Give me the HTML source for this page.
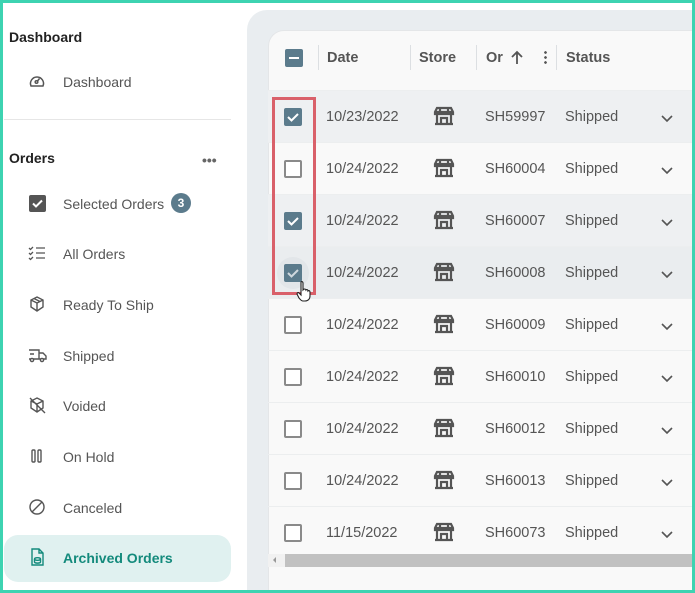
<!DOCTYPE html>
<html><head><style>
*{box-sizing:border-box;margin:0;padding:0}
body{width:695px;height:593px;overflow:hidden;font-family:"Liberation Sans",sans-serif;background:#fff;position:relative}
.frame{position:absolute;inset:0;border:3px solid #3dd3b1;z-index:50;pointer-events:none}
.side{position:absolute;left:0;top:0;width:247px;height:593px;background:#fff}
.h{position:absolute;left:9px;font-size:14px;color:#222;font-weight:bold}
.it{position:absolute;left:0;width:247px;height:40px;font-size:14px;color:#555}
.it span{position:absolute;left:63px;top:13px}
.it svg{position:absolute;left:28px;top:11px}
.main{position:absolute;left:247px;top:10px;width:448px;height:583px;background:#e9edf0;border-top-left-radius:20px}
.card{position:absolute;left:268px;top:30px;width:427px;height:563px;background:#f9f9f9;border-top-left-radius:16px;border:1px solid #e4e6e8;border-right:none;border-bottom:none;overflow:hidden}
.th{position:absolute;top:50px;font-size:14.5px;color:#555;font-weight:bold}
.sep{position:absolute;top:45px;width:1px;height:25px;background:#dcdfe2}
.row{position:absolute;left:268px;width:427px;height:52px;font-size:14.5px;color:#555;border-top:1px solid #eceeef}
.row.sel{background:#eef0f2}
.row .d{position:absolute;left:58px;top:18px}
.row .o{position:absolute;left:217px;top:18px}
.row .s{position:absolute;left:297px;top:18px}
.cb{position:absolute;left:16px;top:17px;width:18px;height:18px;border:2px solid #8a8a8a;border-radius:2px;background:#fff}
.cb.on{background:#5b7b8c;border-color:#5b7b8c}
.st{position:absolute;left:165px;top:14px}
.ch{position:absolute;left:392px;top:23px}
</style></head><body>
<div class="side">
<div class="h" style="top:29px">Dashboard</div>
<div class="it" style="top:61px"><svg width="18" height="18" viewBox="0 0 18 18" fill="none" stroke="#555" stroke-width="1.5"><path d="M3 14a6.5 6.5 0 1 1 12 0z"/><circle cx="8.5" cy="10" r="1.3"/><path d="M9.5 9l2-2.5"/></svg><span>Dashboard</span></div>
<div style="position:absolute;left:4px;top:119px;width:227px;height:1px;background:#e6e6e6"></div>
<div class="h" style="top:150px">Orders</div>
<div style="position:absolute;left:202px;top:152px;font-size:14px;color:#666;letter-spacing:0;font-weight:bold">•••</div>
<div class="it" style="top:183px"><svg width="18" height="18" viewBox="0 0 18 18"><rect x="1" y="1" width="17" height="17" rx="2" fill="#555"/><path d="M5 9.5l3 3 6-6" stroke="#fff" stroke-width="2" fill="none"/></svg><span>Selected Orders</span><div style="position:absolute;left:171px;top:10px;width:20px;height:20px;border-radius:50%;background:#5b7b8c;color:#fff;font-size:12px;font-weight:bold;text-align:center;line-height:20px">3</div></div>
<div class="it" style="top:233px"><svg width="18" height="18" viewBox="0 0 18 18" fill="none" stroke="#555" stroke-width="1.3"><path d="M1 4l1.5 1.5L5 3M1 9l1.5 1.5L5 8M1 14l1.5 1.5L5 13M8 4h9M8 9h9M8 14h9"/></svg><span>All Orders</span></div>
<div class="it" style="top:284px"><svg width="18" height="18" viewBox="0 0 18 18" fill="none" stroke="#555" stroke-width="1.4"><path d="M9 2l6 3v7l-6 4-6-4V5zM3 5l6 3 6-3M9 8v8M6 3.5l6 3"/></svg><span>Ready To Ship</span></div>
<div class="it" style="top:335px"><svg width="19" height="18" viewBox="0 0 19 18" fill="none" stroke="#555" stroke-width="1.4"><path d="M1 4h10v9H1M11 7h4l3 3v3h-7M2 8h4"/><circle cx="4" cy="14" r="1.6" fill="#fff"/><circle cx="14" cy="14" r="1.6" fill="#fff"/></svg><span>Shipped</span></div>
<div class="it" style="top:385px"><svg width="18" height="18" viewBox="0 0 18 18" fill="none" stroke="#555" stroke-width="1.4"><path d="M9 2l6 3v7l-6 4-6-4V5zM3 5l6 3 6-3M9 8v8M2 2l15 15"/></svg><span>Voided</span></div>
<div class="it" style="top:436px"><svg width="18" height="18" viewBox="0 0 18 18" fill="none" stroke="#555" stroke-width="1.4"><rect x="4" y="3" width="3" height="12" rx="1"/><rect x="10" y="3" width="3" height="12" rx="1"/></svg><span>On Hold</span></div>
<div class="it" style="top:487px"><svg width="18" height="18" viewBox="0 0 18 18" fill="none" stroke="#555" stroke-width="1.4"><circle cx="9" cy="9" r="7"/><path d="M4 14L14 4"/></svg><span>Canceled</span></div>
<div style="position:absolute;left:4px;top:535px;width:227px;height:47px;background:#e0f1f0;border-radius:14px"></div>
<div class="it" style="top:537px;color:#138a7c;font-weight:bold"><svg width="18" height="18" viewBox="0 0 18 18" fill="none" stroke="#138a7c" stroke-width="1.4"><path d="M4 1h7l4 4v12H4zM11 1v4h4"/><ellipse cx="9.5" cy="11" rx="3" ry="1.3"/><path d="M6.5 11v3c0 1.5 6 1.5 6 0v-3"/></svg><span>Archived Orders</span></div>
</div>
<div class="main"></div>
<div class="card"></div>
<div style="position:absolute;left:285px;top:49px;width:18px;height:18px;border-radius:2px;background:#5b7b8c"><div style="position:absolute;left:4px;top:8px;width:10px;height:2px;background:#fff"></div></div>
<div class="sep" style="left:318px"></div><div class="th" style="left:327px">Date</div>
<div class="sep" style="left:410px"></div><div class="th" style="left:419px">Store</div>
<div class="sep" style="left:476px"></div><div class="th" style="left:486px">Or</div>
<svg style="position:absolute;left:510px;top:50px" width="14" height="15" viewBox="0 0 14 15"><path d="M7 14V2M2 7l5-5 5 5" stroke="#555" stroke-width="1.8" fill="none"/></svg>
<div style="position:absolute;left:544px;top:50px;width:3px;height:14px;background:radial-gradient(circle,#555 1.2px,transparent 1.5px) 0 0/3px 5px"></div>
<div class="sep" style="left:556px"></div><div class="th" style="left:566px">Status</div>
<div class="row sel" style="top:90px"><div class="cb on"><svg width="14" height="14" viewBox="0 0 14 14" style="position:absolute;left:0;top:0"><path d="M2 7l3.5 3.5L12 4" stroke="#fff" stroke-width="2" fill="none"/></svg></div><span class="d">10/23/2022</span><svg class="st" width="22" height="22" viewBox="0 0 22 22" fill="none" stroke="#555" stroke-width="2.2"><path d="M4 3h14l2 4v2H2V7zM2 7h18M4 9v10h14V9M2 19h18M8 19v-6h6v6M7 3v4M15 3v4"/></svg><span class="o">SH59997</span><span class="s">Shipped</span><svg class="ch" width="14" height="10" viewBox="0 0 14 10"><path d="M2 2l5 5 5-5" stroke="#555" stroke-width="1.6" fill="none"/></svg></div>
<div class="row" style="top:142px"><div class="cb"></div><span class="d">10/24/2022</span><svg class="st" width="22" height="22" viewBox="0 0 22 22" fill="none" stroke="#555" stroke-width="2.2"><path d="M4 3h14l2 4v2H2V7zM2 7h18M4 9v10h14V9M2 19h18M8 19v-6h6v6M7 3v4M15 3v4"/></svg><span class="o">SH60004</span><span class="s">Shipped</span><svg class="ch" width="14" height="10" viewBox="0 0 14 10"><path d="M2 2l5 5 5-5" stroke="#555" stroke-width="1.6" fill="none"/></svg></div>
<div class="row sel" style="top:194px"><div class="cb on"><svg width="14" height="14" viewBox="0 0 14 14" style="position:absolute;left:0;top:0"><path d="M2 7l3.5 3.5L12 4" stroke="#fff" stroke-width="2" fill="none"/></svg></div><span class="d">10/24/2022</span><svg class="st" width="22" height="22" viewBox="0 0 22 22" fill="none" stroke="#555" stroke-width="2.2"><path d="M4 3h14l2 4v2H2V7zM2 7h18M4 9v10h14V9M2 19h18M8 19v-6h6v6M7 3v4M15 3v4"/></svg><span class="o">SH60007</span><span class="s">Shipped</span><svg class="ch" width="14" height="10" viewBox="0 0 14 10"><path d="M2 2l5 5 5-5" stroke="#555" stroke-width="1.6" fill="none"/></svg></div>
<div class="row sel" style="top:246px;background:#eaedef"><div style="position:absolute;left:9px;top:10px;width:32px;height:32px;border-radius:50%;background:#e2e6e9"></div><div class="cb on"><svg width="14" height="14" viewBox="0 0 14 14" style="position:absolute;left:0;top:0"><path d="M2 7l3.5 3.5L12 4" stroke="#cfd8de" stroke-width="2" fill="none"/></svg></div><span class="d">10/24/2022</span><svg class="st" width="22" height="22" viewBox="0 0 22 22" fill="none" stroke="#555" stroke-width="2.2"><path d="M4 3h14l2 4v2H2V7zM2 7h18M4 9v10h14V9M2 19h18M8 19v-6h6v6M7 3v4M15 3v4"/></svg><span class="o">SH60008</span><span class="s">Shipped</span><svg class="ch" width="14" height="10" viewBox="0 0 14 10"><path d="M2 2l5 5 5-5" stroke="#555" stroke-width="1.6" fill="none"/></svg></div>
<div class="row" style="top:298px"><div class="cb"></div><span class="d">10/24/2022</span><svg class="st" width="22" height="22" viewBox="0 0 22 22" fill="none" stroke="#555" stroke-width="2.2"><path d="M4 3h14l2 4v2H2V7zM2 7h18M4 9v10h14V9M2 19h18M8 19v-6h6v6M7 3v4M15 3v4"/></svg><span class="o">SH60009</span><span class="s">Shipped</span><svg class="ch" width="14" height="10" viewBox="0 0 14 10"><path d="M2 2l5 5 5-5" stroke="#555" stroke-width="1.6" fill="none"/></svg></div>
<div class="row" style="top:350px"><div class="cb"></div><span class="d">10/24/2022</span><svg class="st" width="22" height="22" viewBox="0 0 22 22" fill="none" stroke="#555" stroke-width="2.2"><path d="M4 3h14l2 4v2H2V7zM2 7h18M4 9v10h14V9M2 19h18M8 19v-6h6v6M7 3v4M15 3v4"/></svg><span class="o">SH60010</span><span class="s">Shipped</span><svg class="ch" width="14" height="10" viewBox="0 0 14 10"><path d="M2 2l5 5 5-5" stroke="#555" stroke-width="1.6" fill="none"/></svg></div>
<div class="row" style="top:402px"><div class="cb"></div><span class="d">10/24/2022</span><svg class="st" width="22" height="22" viewBox="0 0 22 22" fill="none" stroke="#555" stroke-width="2.2"><path d="M4 3h14l2 4v2H2V7zM2 7h18M4 9v10h14V9M2 19h18M8 19v-6h6v6M7 3v4M15 3v4"/></svg><span class="o">SH60012</span><span class="s">Shipped</span><svg class="ch" width="14" height="10" viewBox="0 0 14 10"><path d="M2 2l5 5 5-5" stroke="#555" stroke-width="1.6" fill="none"/></svg></div>
<div class="row" style="top:454px"><div class="cb"></div><span class="d">10/24/2022</span><svg class="st" width="22" height="22" viewBox="0 0 22 22" fill="none" stroke="#555" stroke-width="2.2"><path d="M4 3h14l2 4v2H2V7zM2 7h18M4 9v10h14V9M2 19h18M8 19v-6h6v6M7 3v4M15 3v4"/></svg><span class="o">SH60013</span><span class="s">Shipped</span><svg class="ch" width="14" height="10" viewBox="0 0 14 10"><path d="M2 2l5 5 5-5" stroke="#555" stroke-width="1.6" fill="none"/></svg></div>
<div class="row" style="top:506px"><div class="cb"></div><span class="d">11/15/2022</span><svg class="st" width="22" height="22" viewBox="0 0 22 22" fill="none" stroke="#555" stroke-width="2.2"><path d="M4 3h14l2 4v2H2V7zM2 7h18M4 9v10h14V9M2 19h18M8 19v-6h6v6M7 3v4M15 3v4"/></svg><span class="o">SH60073</span><span class="s">Shipped</span><svg class="ch" width="14" height="10" viewBox="0 0 14 10"><path d="M2 2l5 5 5-5" stroke="#555" stroke-width="1.6" fill="none"/></svg></div>
<div style="position:absolute;left:268px;top:554px;width:427px;height:13px;background:#f1f1f1"></div>
<div style="position:absolute;left:285px;top:554px;width:410px;height:13px;background:#c1c1c1"></div>
<div style="position:absolute;left:273px;top:557px;width:0;height:0;border-top:3px solid transparent;border-bottom:3px solid transparent;border-right:3px solid #999"></div>
<div style="position:absolute;left:272px;top:97px;width:44px;height:198px;border:3px solid #d9606a"></div>
<svg style="position:absolute;left:296px;top:280px" width="18" height="22" viewBox="0 0 18 22"><path d="M5 2c1-1 2 0 2 1v7l1-1c1 0 2 0 2 1 1-1 2 0 2 1 1-1 2 0 2 1v4c0 3-2 5-5 5H7c-2 0-3-2-4-3l-2-4c0-1 1-2 2-1l2 2V3z" fill="#fff" stroke="#222" stroke-width="1.1"/></svg>
<div class="frame"></div>
</body></html>
